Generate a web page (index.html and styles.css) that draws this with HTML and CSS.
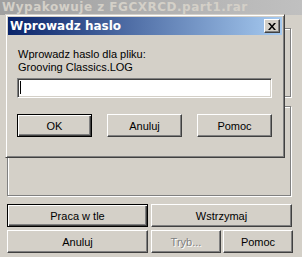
FILE: index.html
```html
<!DOCTYPE html>
<html lang="pl">
<head>
  <meta charset="UTF-8">
  <meta name="viewport" content="width=device-width, initial-scale=1.0">
  <title>Wypakowuje</title>
  <link rel="stylesheet" href="styles.css">
</head>
<body>
  <div class="window">
    <div class="titlebar">Wypakowuje z FGCXRCD.part1.rar</div>
    <div class="content">
      <div class="group group-top"></div>
      <div class="group group-bottom"></div>
      <div class="actions row-one">
        <div class="btn default">Praca w tle</div>
        <div class="btn">Wstrzymaj</div>
      </div>
      <div class="actions row-two">
        <div class="btn">Anuluj</div>
        <div class="btn disabled">Tryb...</div>
        <div class="btn">Pomoc</div>
      </div>
    </div>

    <div class="dialog">
      <div class="dialog-title">
        <span class="dialog-caption">Wprowadz haslo</span>
        <div class="close">
          <svg width="8" height="7" viewBox="0 0 8 7">
            <path d="M0 0h2l2 2.5L6 0h2L5 3.5 8 7H6L4 4.5 2 7H0l3-3.5z" fill="#000"/>
          </svg>
        </div>
      </div>
      <div class="dialog-body">
        <p class="prompt">Wprowadz haslo dla pliku:<br>Grooving Classics.LOG</p>
        <div class="field"><span class="caret"></span></div>
        <div class="dialog-buttons">
          <div class="btn default">OK</div>
          <div class="btn">Anuluj</div>
          <div class="btn">Pomoc</div>
        </div>
      </div>
    </div>
  </div>
</body>
</html>
```

FILE: styles.css
```css
* {
  box-sizing: border-box;
}

body {
  margin: 0;
  background: #d4d0c8;
  font-family: "Liberation Sans", Arial, sans-serif;
  font-size: 11px;
  color: #000;
}

.window {
  position: relative;
  width: 302px;
  height: 257px;
  overflow: hidden;
}

.titlebar {
  height: 15px;
  padding-left: 2px;
  background: linear-gradient(to right, #a0a0a0, #c0c0c0);
  color: #d4d0c8;
  font-family: "DejaVu Sans", Verdana, sans-serif;
  font-weight: bold;
  font-size: 12px;
  letter-spacing: 0.5px;
  line-height: 14px;
  white-space: nowrap;
}

.content {
  padding: 0 11px 0 7px;
}

.group {
  border: 1px solid #808080;
  box-shadow: 1px 1px 0 #fff, inset 1px 1px 0 #fff;
}

.group-top {
  margin-top: 13px;
  height: 69px;
}

.group-bottom {
  margin-top: 9px;
  height: 90px;
}

.actions {
  display: grid;
  height: 23px;
}

.row-one {
  margin-top: 8px;
  grid-template-columns: 141px 141px;
  column-gap: 3px;
}

.row-two {
  margin-top: 3px;
  grid-template-columns: 141px 70px 69px;
  column-gap: 3px;
}

.row-two .btn:last-child {
  margin-left: -1px;
}

.btn {
  display: flex;
  align-items: center;
  justify-content: center;
  height: 23px;
  border: 1px solid;
  border-color: #fff #404040 #404040 #fff;
  box-shadow: inset -1px -1px 0 #808080;
  background: #d4d0c8;
}

.btn.default {
  border-color: #000;
  box-shadow: inset 1px 1px 0 #fff, inset -1px -1px 0 #404040, inset -2px -2px 0 #808080;
}

.btn.disabled {
  color: #808080;
  text-shadow: 1px 1px 0 #fff;
}

.dialog {
  position: absolute;
  left: 5px;
  top: 14px;
  width: 280px;
  height: 144px;
  padding: 2px;
  border: 1px solid;
  border-color: #d4d0c8 #404040 #404040 #d4d0c8;
  box-shadow: inset 1px 1px 0 #fff, inset -1px -1px 0 #808080;
  background: #d4d0c8;
}

.dialog-title {
  display: flex;
  align-items: center;
  justify-content: space-between;
  height: 18px;
  padding: 0 2px 0 2px;
  background: linear-gradient(to right, #0a246a, #a6caf0);
}

.dialog-caption {
  color: #fff;
  font-family: "DejaVu Sans", Verdana, sans-serif;
  font-weight: bold;
  font-size: 12px;
}

.close {
  display: flex;
  align-items: center;
  justify-content: center;
  width: 16px;
  height: 14px;
  border: 1px solid;
  border-color: #fff #404040 #404040 #fff;
  box-shadow: inset -1px -1px 0 #808080;
  background: #d4d0c8;
}

.dialog-body {
  padding: 0 0 0 9px;
}

.prompt {
  margin: 13px 0 0;
  padding-left: 1px;
  line-height: 13px;
}

.field {
  position: relative;
  width: 255px;
  height: 20px;
  margin-top: 4px;
  border: 1px solid;
  border-color: #808080 #fff #fff #808080;
  box-shadow: inset 1px 1px 0 #404040, inset -1px -1px 0 #d4d0c8;
  background: #fff;
}

.caret {
  position: absolute;
  left: 2px;
  top: 2px;
  width: 1px;
  height: 13px;
  background: #000;
}

.dialog-buttons {
  display: grid;
  grid-template-columns: repeat(3, 75px);
  column-gap: 15px;
  margin-top: 16px;
}
```
